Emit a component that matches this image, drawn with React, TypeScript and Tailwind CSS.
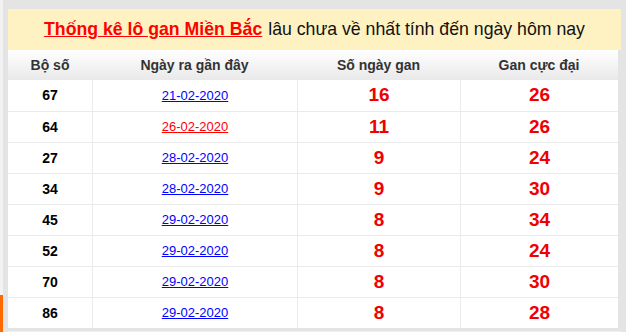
const rows = [
  { bo: "67", date: "21-02-2020", gan: "16", max: "26", hot: false },
  { bo: "64", date: "26-02-2020", gan: "11", max: "26", hot: true },
  { bo: "27", date: "28-02-2020", gan: "9", max: "24", hot: false },
  { bo: "34", date: "28-02-2020", gan: "9", max: "30", hot: false },
  { bo: "45", date: "29-02-2020", gan: "8", max: "34", hot: false },
  { bo: "52", date: "29-02-2020", gan: "8", max: "24", hot: false },
  { bo: "70", date: "29-02-2020", gan: "8", max: "30", hot: false },
  { bo: "86", date: "29-02-2020", gan: "8", max: "28", hot: false },
];

const cols = "grid grid-cols-[84px_205px_163px_158px]";

export default function App() {
  return (
    <div
      className="flex w-[626px] h-[332px] overflow-hidden bg-[#e4e4e4]"
      style={{ fontFamily: '"Liberation Sans", Arial, sans-serif' }}
    >
      {/* left page edge */}
      <div className="flex flex-col shrink-0 w-[3px] bg-[#f2f2f2]">
        <div className="flex-1" />
        <div className="h-[37px] bg-[#ff6a00]" />
      </div>

      <div className="flex flex-col pl-[5px] pt-[9px]">
        <div className="flex shrink-0 items-center justify-center w-[613px] h-[41px] bg-[#fff2c2] text-[17.7px] text-[#111] whitespace-nowrap">
          <a href="#" className="font-bold text-[#ff0000] underline mr-[6px]">
            Thống kê lô gan Miền Bắc
          </a>
          <span>lâu chưa về nhất tính đến ngày hôm nay</span>
        </div>

        <div className="shrink-0 w-[610px] bg-white">
          <div className={`${cols} h-[30px] bg-gradient-to-b from-white to-[#e9e9e9] text-[14px] font-bold text-[#333]`}>
            <div className="flex items-center justify-center">Bộ số</div>
            <div className="flex items-center justify-center">Ngày ra gần đây</div>
            <div className="flex items-center justify-center">Số ngày gan</div>
            <div className="flex items-center justify-center">Gan cực đại</div>
          </div>

          {rows.map((r, i) => (
            <div
              key={r.bo}
              className={`${cols} h-[31px] ${i > 0 ? "border-t border-[#ebebeb]" : ""}`}
            >
              <div className="flex items-center justify-center text-[14px] font-bold text-black">
                {r.bo}
              </div>
              <div className="flex items-center justify-center border-l border-[#ebebeb] text-[13px]">
                <a
                  href="#"
                  className={`underline ${r.hot ? "text-[#ff0000]" : "text-[#0000ff]"}`}
                >
                  {r.date}
                </a>
              </div>
              <div className="flex items-center justify-center border-l border-[#ebebeb] text-[19px] font-bold text-[#f00000]">
                {r.gan}
              </div>
              <div className="flex items-center justify-center border-l border-[#ebebeb] text-[19px] font-bold text-[#f00000]">
                {r.max}
              </div>
            </div>
          ))}
        </div>

        <div className="shrink-0 mt-[3px] w-[613px] h-[10px] bg-[#fff2c2]" />
      </div>
    </div>
  );
}
